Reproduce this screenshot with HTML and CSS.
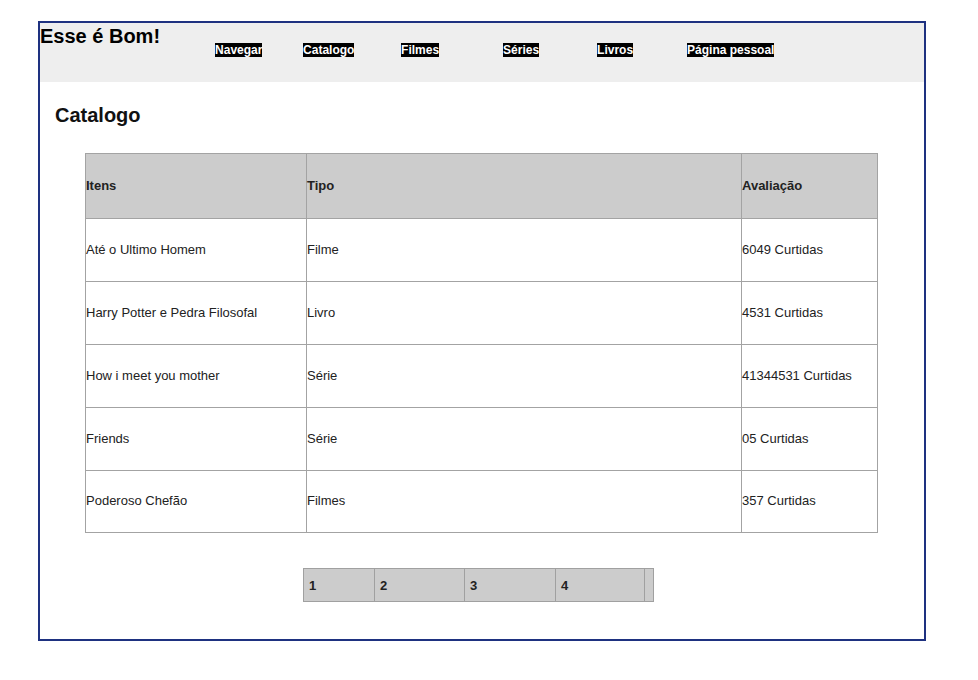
FILE: index.html
```html
<!DOCTYPE html>
<html lang="pt">
<head>
<meta charset="utf-8">
<title>Esse é Bom!</title>
<link rel="stylesheet" href="styles.css">
</head>
<body>
<div class="page">
  <header class="topbar">
    <h1 class="brand">Esse é Bom!</h1>
    <nav class="nav">
      <a class="nav-link" href="#">Navegar</a>
      <a class="nav-link" href="#">Catalogo</a>
      <a class="nav-link" href="#">Filmes</a>
      <a class="nav-link" href="#">Séries</a>
      <a class="nav-link" href="#">Livros</a>
      <a class="nav-link" href="#">Página pessoal</a>
    </nav>
  </header>
  <main class="content">
    <h2 class="title">Catalogo</h2>
    <table class="catalog">
      <colgroup>
        <col class="c-item">
        <col class="c-type">
        <col class="c-rate">
      </colgroup>
      <thead>
        <tr class="head-row"><th>Itens</th><th>Tipo</th><th>Avaliação</th></tr>
      </thead>
      <tbody>
        <tr><td>Até o Ultimo Homem</td><td>Filme</td><td>6049 Curtidas</td></tr>
        <tr><td>Harry Potter e Pedra Filosofal</td><td>Livro</td><td>4531 Curtidas</td></tr>
        <tr><td>How i meet you mother</td><td>Série</td><td>41344531 Curtidas</td></tr>
        <tr><td>Friends</td><td>Série</td><td>05 Curtidas</td></tr>
        <tr><td>Poderoso Chefão</td><td>Filmes</td><td>357 Curtidas</td></tr>
      </tbody>
    </table>
    <table class="pager">
      <tr>
        <td class="p1">1</td>
        <td class="p2">2</td>
        <td class="p3">3</td>
        <td class="p4">4</td>
        <td class="p5"></td>
      </tr>
    </table>
  </main>
</div>
</body>
</html>
```
FILE: styles.css
```css
html, body {
  margin: 0;
  padding: 0;
  background: #fff;
}
body {
  font-family: "Liberation Sans", Arial, sans-serif;
  color: #222;
}
.page {
  margin: 21px 0 0 38px;
  width: 884px;
  border: 2px solid #1e3180;
  padding-bottom: 37px;
}
.topbar {
  display: flex;
  align-items: flex-start;
  height: 59px;
  background: #eeeeee;
}
.brand {
  margin: 2px 0 0 0;
  font-size: 20px;
  line-height: 23px;
  font-weight: bold;
  color: #000;
}
.nav {
  display: grid;
  grid-template-columns: 88px 98px 102px 94px 90px auto;
  margin: 20px 0 0 55px;
  font-size: 12px;
  font-weight: bold;
}
.nav-link {
  justify-self: start;
  background: #000;
  color: #fff;
  text-decoration: none;
}
.content {
  padding: 0;
}
.title {
  margin: 22px 0 0 15px;
  font-size: 20px;
  line-height: 23px;
  font-weight: bold;
  color: #111;
}
.catalog {
  margin: 26px 0 0 45px;
  width: 792px;
  border-collapse: collapse;
  table-layout: fixed;
  font-size: 13px;
}
.c-item { width: 221px; }
.c-type { width: 435px; }
.c-rate { width: 136px; }
.catalog th,
.catalog td {
  border: 1px solid #a3a3a3;
  padding: 0 0 2px 0;
  text-align: left;
  vertical-align: middle;
  height: 60px;
}
.catalog th {
  background: #cccccc;
  font-weight: bold;
  color: #222;
  height: 62px;
}
.catalog tbody tr:last-child td {
  height: 59px;
}
.pager {
  margin: 35px 0 0 263px;
  border-collapse: collapse;
  table-layout: fixed;
  width: 351px;
  background: #cccccc;
  font-size: 13px;
  font-weight: bold;
}
.pager td {
  border: 1px solid #a0a0a0;
  padding: 0 0 0 5px;
  height: 32px;
  vertical-align: middle;
}
.p1 { width: 65px; }
.p2 { width: 84px; }
.p3 { width: 85px; }
.p4 { width: 83px; }
.p5 { padding: 0 !important; }
```
